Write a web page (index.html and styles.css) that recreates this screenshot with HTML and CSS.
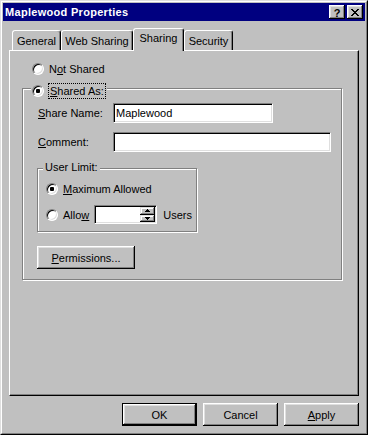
FILE: index.html
```html
<!DOCTYPE html>
<html>
<head>
<meta charset="utf-8">
<title>Maplewood Properties</title>
<link rel="stylesheet" href="styles.css">
</head>
<body>
<div class="window">
  <div class="frame">
    <div class="titlebar">
      <span class="title">Maplewood Properties</span>
      <div class="caption-btns">
        <span class="cap-btn help">?</span>
        <span class="cap-btn close">
          <svg width="8" height="7" viewBox="0 0 8 7" shape-rendering="crispEdges"><path d="M0 0h2v1h-2z M6 0h2v1h-2z M1 1h2v1h-2z M5 1h2v1h-2z M2 2h4v1h-4z M3 3h2v1h-2z M2 4h4v1h-4z M1 5h2v1h-2z M5 5h2v1h-2z M0 6h2v1h-2z M6 6h2v1h-2z" fill="#000"/></svg>
        </span>
      </div>
    </div>
    <div class="client">
      <div class="tabs">
        <div class="tab tab-general">General</div>
        <div class="tab tab-web">Web Sharing</div>
        <div class="tab tab-sharing selected">Sharing</div>
        <div class="tab tab-security">Security</div>
      </div>
      <div class="panel">
        <div class="radio-row not-shared">
          <span class="radio"></span>
          <span class="rtext">N<u>o</u>t Shared</span>
        </div>
        <div class="group shared-group">
          <div class="group-title shared-title">
            <span class="radio checked"></span>
            <span class="focus"><u>S</u>hared As:</span>
          </div>
          <div class="field-row">
            <span class="label"><u>S</u>hare Name:</span>
            <div class="edit edit-name">Maplewood</div>
          </div>
          <div class="field-row row-comment">
            <span class="label"><u>C</u>omment:</span>
            <div class="edit edit-comment"></div>
          </div>
          <div class="group user-group">
            <div class="group-title user-title">User Limit:</div>
            <div class="radio-row">
              <span class="radio checked"></span>
              <span class="rtext"><u>M</u>aximum Allowed</span>
            </div>
            <div class="radio-row allow-row">
              <span class="radio"></span>
              <span class="rtext">Allo<u>w</u></span>
              <div class="spin">
                <div class="spin-field"></div>
                <div class="spin-btns">
                  <span class="spin-btn up"><svg width="5" height="3" viewBox="0 0 5 3" shape-rendering="crispEdges"><path d="M2 0h1v1h-1z M1 1h3v1h-3z M0 2h5v1h-5z" fill="#000"/></svg></span>
                  <span class="spin-btn down"><svg width="5" height="3" viewBox="0 0 5 3" shape-rendering="crispEdges"><path d="M0 0h5v1h-5z M1 1h3v1h-3z M2 2h1v1h-1z" fill="#000"/></svg></span>
                </div>
              </div>
              <span class="rtext users">Users</span>
            </div>
          </div>
          <div class="btn perm"><span><u>P</u>ermissions...</span></div>
        </div>
      </div>
      <div class="buttons">
        <div class="btn default">OK</div>
        <div class="btn">Cancel</div>
        <div class="btn"><span><u>A</u>pply</span></div>
      </div>
    </div>
  </div>
</div>
</body>
</html>
```
FILE: styles.css
```css
* {
  box-sizing: border-box;
  margin: 0;
  padding: 0;
}

html, body {
  width: 368px;
  height: 435px;
  overflow: hidden;
}

body {
  background: #c0c0c0;
  font-family: "Liberation Sans", Arial, sans-serif;
  font-size: 11px;
  line-height: 12px;
  color: #000;
}

u {
  text-decoration: underline;
  text-underline-offset: 1px;
}

.window {
  width: 368px;
  height: 435px;
  border: 1px solid;
  border-color: #dfdfdf #000 #000 #dfdfdf;
  background: #c0c0c0;
}

.frame {
  height: 100%;
  border: 1px solid;
  border-color: #fff #808080 #808080 #fff;
  padding: 1px;
  display: flex;
  flex-direction: column;
}

/* Title bar */
.titlebar {
  height: 18px;
  flex: none;
  background: #000080;
  display: flex;
  align-items: center;
  justify-content: space-between;
  padding: 0 2px 0 2px;
}

.title {
  color: #fff;
  font-weight: bold;
  font-size: 11px;
  letter-spacing: 0.3px;
}

.caption-btns {
  display: flex;
  gap: 2px;
}

.cap-btn {
  width: 16px;
  height: 14px;
  background: #c0c0c0;
  box-shadow: inset -1px -1px #000, inset 1px 1px #fff, inset -2px -2px #808080, inset 2px 2px #dfdfdf;
  display: flex;
  align-items: center;
  justify-content: center;
}

.cap-btn.help {
  font-weight: bold;
  font-size: 11px;
  line-height: 12px;
  color: #000;
  padding-top: 1px;
}

.cap-btn.close svg {
  display: block;
}

/* Client */
.client {
  flex: 1;
  display: flex;
  flex-direction: column;
  padding: 7px 6px 6px 6px;
}

.tabs {
  height: 22px;
  flex: none;
  display: flex;
  align-items: flex-end;
  padding-left: 3px;
  position: relative;
  z-index: 1;
}

.tab {
  height: 20px;
  border: 1px solid;
  border-bottom: none;
  border-color: #fff #000 transparent #fff;
  border-radius: 3px 3px 0 0;
  box-shadow: inset -1px 0 #808080;
  text-align: center;
  padding-top: 4px;
  background: #c0c0c0;
}

.tab-general { width: 49px; }
.tab-web { width: 72px; }
.tab-sharing { width: 51px; }
.tab-security { width: 49px; }

.tab.selected {
  height: 23px;
  margin-bottom: -1px;
  padding-top: 3px;
}

.panel {
  flex: 1;
  border: 1px solid;
  border-color: #fff #000 #000 #fff;
  box-shadow: inset -1px -1px #808080;
  padding: 12px 0 0 12px;
}

/* Radio */
.radio-row {
  display: flex;
  align-items: center;
  height: 12px;
}

.not-shared {
  margin-left: 10px;
}

.radio {
  width: 12px;
  height: 12px;
  flex: none;
  border-radius: 50%;
  border: 1px solid;
  border-color: #808080 #fff #fff #808080;
  background: #fff;
  box-shadow: inset 1px 1px #000, inset -1px -1px #dfdfdf;
  display: flex;
  align-items: center;
  justify-content: center;
}

.radio.checked::after {
  content: "";
  width: 4px;
  height: 4px;
  background: #000;
  border-radius: 1px;
}

.rtext {
  margin-left: 5px;
  white-space: nowrap;
}

/* Group boxes */
.group {
  position: relative;
  border: 1px solid #808080;
  box-shadow: inset 1px 1px #fff, 1px 1px #fff;
}

.group-title {
  position: absolute;
  background: #c0c0c0;
  display: flex;
  align-items: center;
  white-space: nowrap;
}

.shared-group {
  width: 320px;
  margin-top: 13px;
  padding: 14px 0 10px 14px;
}

.shared-title {
  top: -6px;
  left: 8px;
  padding: 0 1px;
}

.focus {
  margin-left: 4px;
  border: 1px dotted #000;
  padding: 1px 1px;
  line-height: 12px;
}

.field-row {
  display: flex;
  align-items: center;
  height: 20px;
}

.row-comment {
  margin-top: 9px;
}

.label {
  width: 76px;
  padding-left: 1px;
  white-space: nowrap;
}

.edit {
  height: 20px;
  background: #fff;
  border: 1px solid;
  border-color: #808080 #fff #fff #808080;
  box-shadow: inset 1px 1px #000, inset -1px -1px #dfdfdf;
  padding: 0 2px;
  line-height: 18px;
}

.edit-name { width: 160px; }
.edit-comment { width: 218px; }

.user-group {
  width: 160px;
  margin-top: 16px;
  padding: 14px 0 7px 8px;
}

.user-title {
  top: -8px;
  left: 5px;
  padding: 0 2px;
}

.allow-row {
  height: 19px;
  margin-top: 10px;
}

.spin {
  width: 63px;
  height: 19px;
  margin-left: 5px;
  background: #fff;
  border: 1px solid;
  border-color: #808080 #fff #fff #808080;
  box-shadow: inset 1px 1px #000, inset -1px -1px #dfdfdf;
  display: flex;
  padding: 1px;
}

.spin-field {
  flex: 1;
}

.spin-btns {
  width: 15px;
  display: flex;
  flex-direction: column;
}

.spin-btn {
  flex: 1;
  background: #c0c0c0;
  box-shadow: inset -1px -1px #000, inset 1px 1px #dfdfdf, inset -2px -2px #808080, inset 2px 2px #fff;
  display: flex;
  align-items: center;
  justify-content: center;
}

.spin-btn svg {
  display: block;
}

.users {
  margin-left: 6px;
}

/* Buttons */
.btn {
  width: 75px;
  height: 23px;
  background: #c0c0c0;
  box-shadow: inset -1px -1px #000, inset 1px 1px #fff, inset -2px -2px #808080, inset 2px 2px #dfdfdf;
  display: flex;
  align-items: center;
  justify-content: center;
  white-space: nowrap;
}

.btn.default {
  border: 1px solid #000;
}

.perm {
  width: 98px;
  margin-top: 14px;
}

.buttons {
  flex: none;
  display: flex;
  justify-content: flex-end;
  gap: 6px;
  margin-top: 7px;
}
```
